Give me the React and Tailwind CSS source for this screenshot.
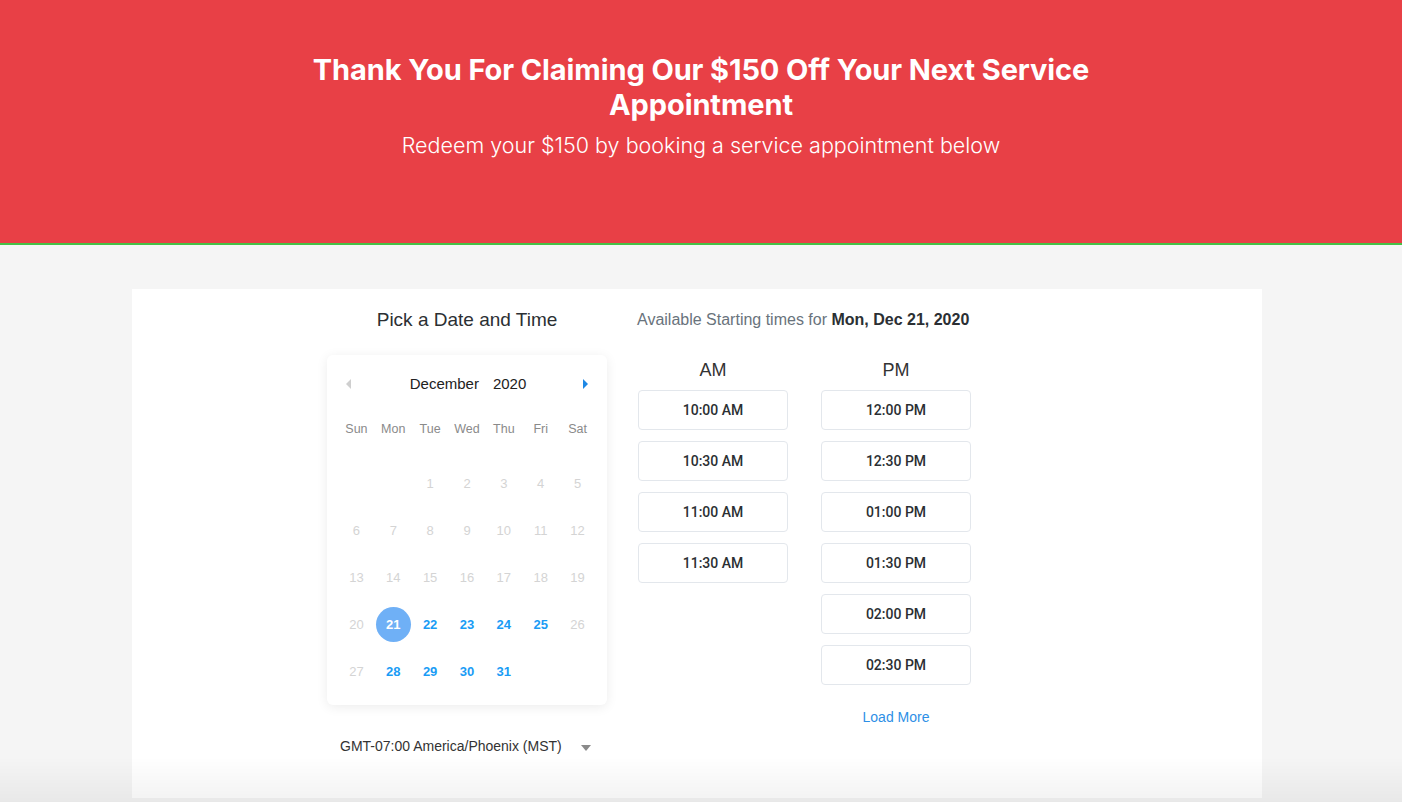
import { useState } from "react";

const weekdays = ["Sun", "Mon", "Tue", "Wed", "Thu", "Fri", "Sat"];
const amTimes = ["10:00 AM", "10:30 AM", "11:00 AM", "11:30 AM"];
const pmTimes = ["12:00 PM", "12:30 PM", "01:00 PM", "01:30 PM", "02:00 PM", "02:30 PM"];
const available = [21, 22, 23, 24, 25, 28, 29, 30, 31];

const TimeButton = ({ label }) => (
  <button
    className="w-[150px] h-[40px] bg-white border border-[#e3e7ec] rounded-[4px] text-[14px] font-medium text-[#2b2f33]"
    style={{ fontFamily: "Roboto, Arial, sans-serif" }}
  >
    {label}
  </button>
);

const App = () => {
  const [selected, setSelected] = useState(21);
  // December 2020 starts on Tuesday
  const cells = [null, null, ...Array.from({ length: 31 }, (_, i) => i + 1)];

  return (
    <div
      className="min-h-screen bg-[#f5f5f5] pb-[4px]"
      style={{ fontFamily: '"Liberation Sans", Arial, sans-serif' }}
    >
      {/* Header */}
      <header
        className="h-[243px] bg-[#e84046] border-b-[2px] border-[#45c046] box-content text-center text-white"
        style={{ fontFamily: "Inter, sans-serif" }}
      >
        <h1 className="pt-[52px] text-[29px] leading-[35px] font-bold tracking-[-0.1px]">
          <span className="block">Thank You For Claiming Our $150 Off Your Next Service</span>
          <span className="block">Appointment</span>
        </h1>
        <p className="mt-[8px] text-[21.5px] leading-[30px] font-light">
          Redeem your $150 by booking a service appointment below
        </p>
      </header>

      {/* Main card */}
      <main className="pt-[44px] pl-[132px]">
        <div className="w-[1130px] bg-white h-[509px] pl-[195px] flex gap-[30px]">
          {/* Calendar column */}
          <div className="w-[280px] pt-[19px]">
            <h2 className="text-center text-[19px] leading-[24px] text-[#2b2f33]">
              Pick a Date and Time
            </h2>
            <div className="mt-[23px] bg-white rounded-[6px] shadow-[0_2px_12px_rgba(0,0,0,0.08)] pt-[14px] pb-[10px] px-[11px]">
              <div className="h-[30px] flex items-center justify-between px-[8px]">
                <span className="w-0 h-0 border-y-[5px] border-y-transparent border-r-[5px] border-r-[#cfcfcf]" />
                <div className="text-[15px] text-[#222] ml-[2px]">
                  <span>December</span>
                  <span className="ml-[14px]">2020</span>
                </div>
                <span className="w-0 h-0 border-y-[5px] border-y-transparent border-l-[5px] border-l-[#1e88e5]" />
              </div>
              <div className="mt-[15px] grid grid-cols-7 h-[30px] items-center text-center text-[12.5px] text-[#8a8a8a]">
                {weekdays.map((d) => (
                  <span key={d}>{d}</span>
                ))}
              </div>
              <div className="mt-[16px] grid grid-cols-7 auto-rows-[47px] text-center text-[13px]">
                {cells.map((d, i) => {
                  if (d === null) return <span key={"e" + i} />;
                  const isAvail = available.includes(d);
                  const isSel = d === selected;
                  return (
                    <div key={d} className="flex items-center justify-center">
                      {isSel ? (
                        <span className="w-[35px] h-[35px] rounded-full bg-[#6fb0f6] text-white font-semibold flex items-center justify-center">
                          {d}
                        </span>
                      ) : isAvail ? (
                        <button
                          onClick={() => setSelected(d)}
                          className="text-[#1a9cf5] font-semibold"
                        >
                          {d}
                        </button>
                      ) : (
                        <span className="text-[#d4d4d4]">{d}</span>
                      )}
                    </div>
                  );
                })}
              </div>
            </div>
            <div className="mt-[31px] pl-[13px] pr-[16px] flex items-center justify-between text-[14px] leading-[20px] text-[#333]">
              <span>GMT-07:00 America/Phoenix (MST)</span>
              <span className="mt-[4px] w-0 h-0 border-x-[5px] border-x-transparent border-t-[6px] border-t-[#8a8a8a]" />
            </div>
          </div>

          {/* Times column */}
          <div className="pt-[20px]">
            <p className="text-[16px] leading-[22px] text-[#69737c]">
              Available Starting times for{" "}
              <span className="font-bold text-[#2b2f33]">Mon, Dec {selected}, 2020</span>
            </p>
            <div className="mt-[27px] ml-[1px] flex gap-[33px]">
              <div className="flex flex-col gap-[11px]">
                <div className="h-[24px] mb-[-3px] text-center text-[18px] leading-[24px] text-[#333]">AM</div>
                {amTimes.map((t) => (
                  <TimeButton key={t} label={t} />
                ))}
              </div>
              <div className="flex flex-col gap-[11px]">
                <div className="h-[24px] mb-[-3px] text-center text-[18px] leading-[24px] text-[#333]">PM</div>
                {pmTimes.map((t) => (
                  <TimeButton key={t} label={t} />
                ))}
                <button className="mt-[11px] text-[14px] leading-[20px] text-[#2d8fe6]">Load More</button>
              </div>
            </div>
          </div>
        </div>
      </main>

      {/* bottom fade */}
      <div className="pointer-events-none fixed bottom-0 left-0 right-0 h-[45px] bg-gradient-to-b from-transparent to-black/[0.05]" />
    </div>
  );
};

export default App;
